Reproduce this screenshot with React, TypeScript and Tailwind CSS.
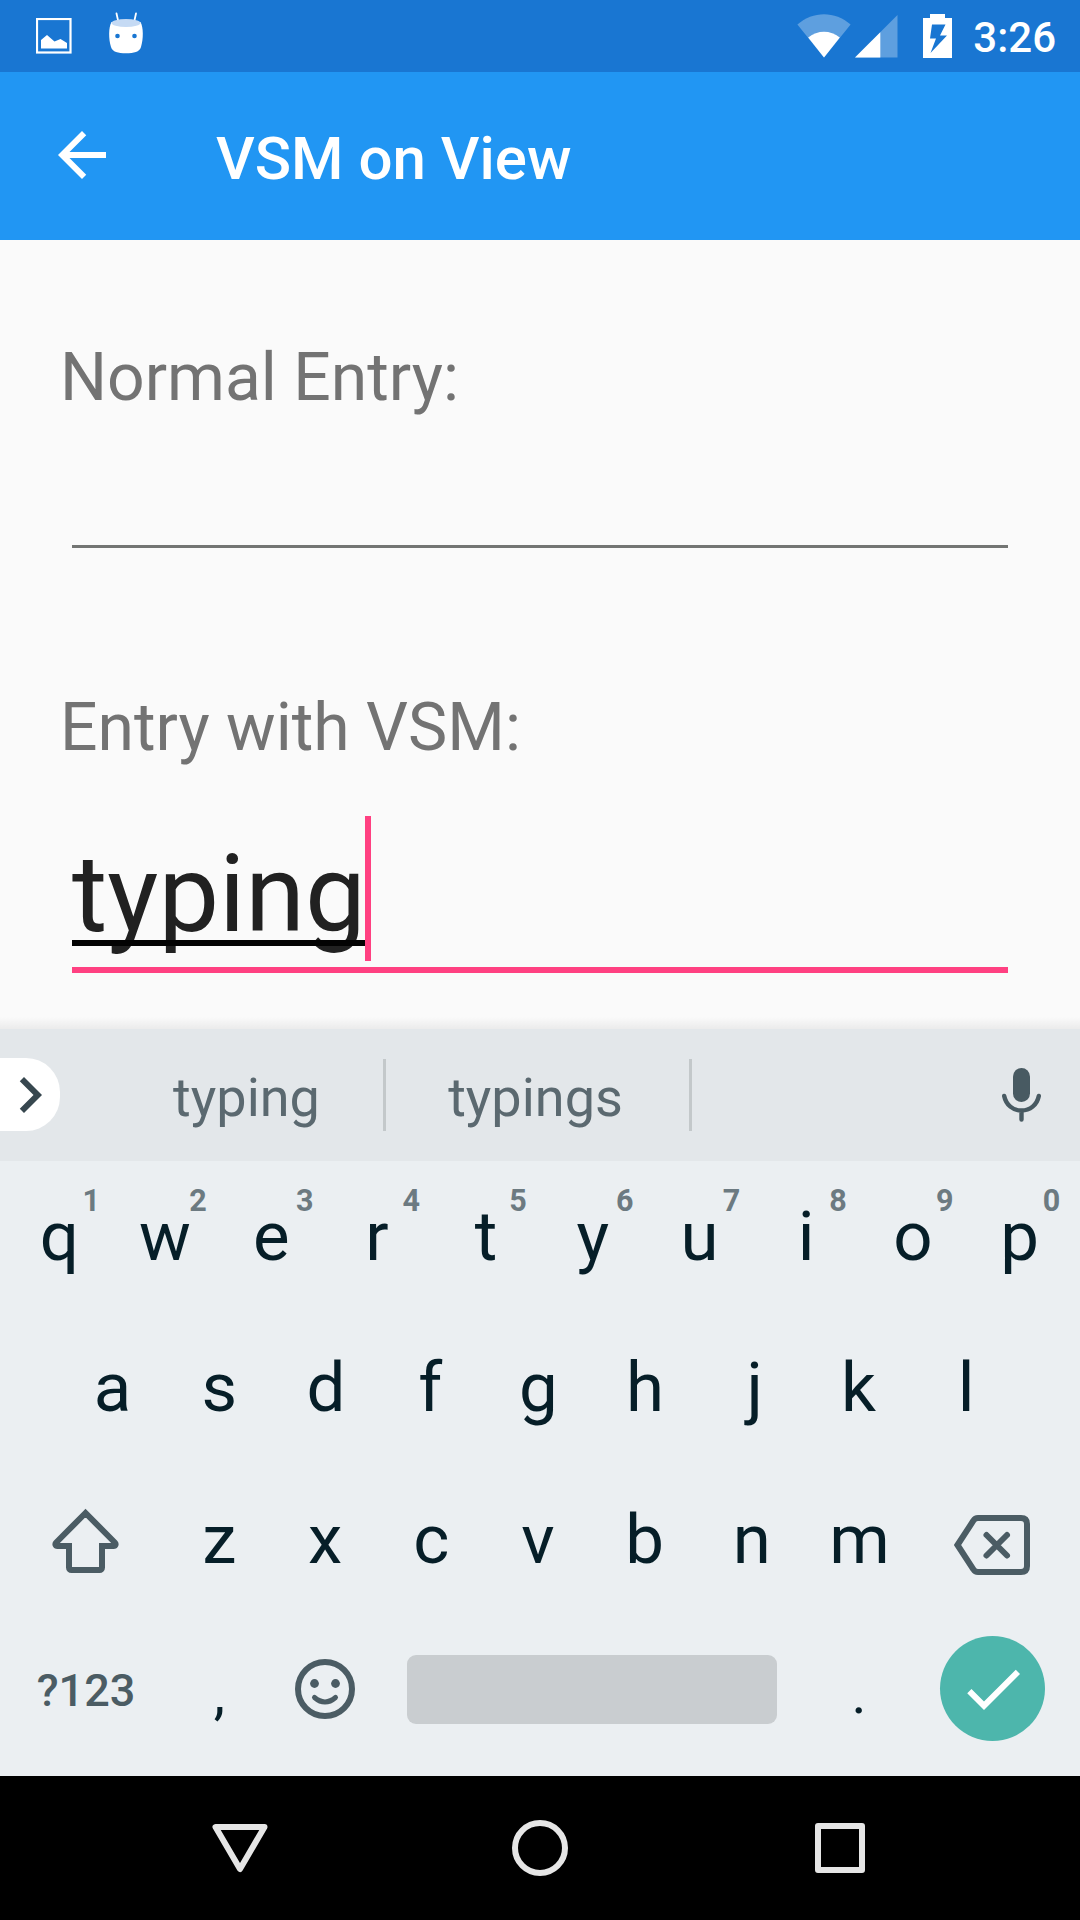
import React from "react";

function StatusBar() {
  return (
    <header className="flex h-[72px] shrink-0 items-center bg-[#1976d2] pl-[36px] text-white">
      <svg className="-mt-px h-[36px] w-[36px]" viewBox="0 0 36 36" fill="none">
        <rect x="1" y="1" width="33.500" height="33.500" stroke="currentColor" strokeWidth="2.200" />
        <path d="M5 30.500V22l6-5 7.500 6.500 6-2.500 6.500 4v5.500z" fill="currentColor" />
      </svg>
      <svg className="-mt-[6px] ml-[36px] h-[42px] w-[36px]" viewBox="0 0 36 42" fill="none">
        <path d="M8.500 1.500l2 9M28 1.500l-2 9" stroke="currentColor" strokeWidth="1.800" strokeLinecap="round" />
        <path d="M3.500 10C.5 15 .5 27 3 35c1.500 5 7 6.200 15 6.200S31.500 40 33 35C35.500 27 35.500 15 32.500 10z" fill="currentColor" />
        <ellipse cx="18" cy="11" rx="14.500" ry="4" fill="#c5daf4" />
        <circle cx="9.500" cy="24" r="2.300" fill="#1976d2" />
        <circle cx="26.500" cy="24" r="2.300" fill="#1976d2" />
      </svg>
      <svg className="ml-auto h-[44px] w-[54px]" viewBox="0 0 54 44">
        <path d="M27 43.500L.4 10.500C16-3.300 38-3.300 53.600 10.500z" fill="#fff" opacity=".3" />
        <path d="M27 43.500L11.200 23.500c9.500-7.800 22.100-7.800 31.600 0z" fill="#fff" />
      </svg>
      <svg className="ml-[4px] h-[44px] w-[43px]" viewBox="0 0 43 44">
        <path d="M0 43.500L42.500 1v42.500z" fill="#fff" opacity=".3" />
        <path d="M0 43.500L25.300 18.200v25.300z" fill="#fff" />
      </svg>
      <svg className="ml-[25px] h-[44px] w-[29px]" viewBox="0 0 29 44">
        <path fillRule="evenodd" d="M7 0h15v4h7v40H0V4h7zM9 10.500L7 24.500h6L7.500 39 24 21.500h-7l5.500-11z" fill="#fff" />
      </svg>
      <span className="ml-[21px] mr-[24px] pt-[3px] text-[42px] font-medium leading-[69px]">3:26</span>
    </header>
  );
}

function AppBar() {
  return (
    <div className="flex h-[168px] shrink-0 items-center bg-[#2196f3] pl-[46px] text-white">
      <svg className="-mt-[2px] h-[72px] w-[72px]" viewBox="0 0 24 24" fill="currentColor">
        <path d="M20 11H7.830l5.590-5.590L12 4l-8 8 8 8 1.410-1.410L7.830 13H20v-2z" />
      </svg>
      <h1 className="ml-[98px] pt-[5px] text-[60px] font-medium leading-[72px]">VSM on View</h1>
    </div>
  );
}

function Form() {
  return (
    <main className="relative flex h-[789px] shrink-0 flex-col bg-[#fafafa] px-[60px] pt-[99px]">
      <label className="text-[66px] leading-[78px] text-[#737373]">Normal Entry:</label>
      <div className="mx-[12px] h-[131px] border-b-[3px] border-[#737573]" />
      <label className="mt-[141px] text-[66px] leading-[78px] text-[#737373]">Entry with VSM:</label>
      <div className="mx-[12px] mt-[49px] flex h-[157px] items-start border-b-[6px] border-[#ff4081]">
        <span className="relative h-[145px] w-[293px] whitespace-nowrap text-[108px] leading-[157px] text-[#212121]">
          typing
          <i className="absolute left-0 top-[124px] h-[6px] w-[294px] bg-[#030303]" />
        </span>
        <i className="relative h-[145px] w-[6px] bg-[#ff4081]" />
      </div>
      <div className="absolute inset-x-0 bottom-0 h-[12px] bg-linear-to-b from-transparent to-black/6" />
    </main>
  );
}

function Suggestions() {
  return (
    <div className="flex h-[132px] shrink-0 items-center bg-[#e3e7ea] text-[54px] text-[#5b6970]">
      <div className="-mt-px flex h-[73px] w-[60px] items-center rounded-r-[34px] bg-white">
        <svg className="-ml-[6px] h-[72px] w-[72px] shrink-0" viewBox="0 0 24 24" fill="#37474f">
          <path d="M10 6L8.590 7.410 13.170 12l-4.580 4.590L10 18l6-6z" />
        </svg>
      </div>
      <span className="ml-[50px] w-[273px] pt-[4px] text-center">typing</span>
      <i className="h-[72px] w-[3px] bg-[#c3c8ca]" />
      <span className="w-[303px] pt-[4px] pr-[4px] text-center">typings</span>
      <i className="h-[72px] w-[3px] bg-[#c3c8ca]" />
      <svg className="-mt-px ml-auto mr-[39px] h-[54px] w-[39px]" viewBox="0 0 39 54" fill="none" stroke="#485a62">
        <rect x="11" y="0" width="17" height="34" rx="8.500" fill="#485a62" stroke="none" />
        <path d="M2.200 28C4 37 11 42.500 19.500 42.500S35 37 36.800 28M19.500 43v8.500" strokeWidth="4.400" strokeLinecap="round" />
      </svg>
    </div>
  );
}

// Optical centring of individual glyphs inside their keys.
const glyphInset: Record<string, string> = {
  w: "pr-[2px]",
  e: "pr-[3px]",
  r: "pr-[5px]",
  f: "pr-[5px]",
  g: "pr-[2px]",
  h: "pr-[2px]",
  j: "pl-[4px]",
  k: "pr-[2px]",
  x: "pr-[2px]",
  c: "pr-[3px]",
  v: "pr-[3px]",
  b: "pr-[3px]",
  n: "pr-[2px]",
};

function Key({ label, hint }: { label: string; hint?: string }) {
  return (
    <div className="relative w-[106.7px] shrink-0 text-center text-[69px] leading-[151px]">
      <div className={glyphInset[label] ?? ""}>{label}</div>
      {hint && (
        <sup className="absolute top-[20px] left-[76.5px] text-[30.5px] font-bold leading-[40px] text-[#6c7a81]">{hint}</sup>
      )}
    </div>
  );
}

function PunctuationKey({ label }: { label: string }) {
  return <div className="w-[106.7px] shrink-0 pt-[3px] text-center text-[57px] leading-[151px]">{label}</div>;
}

function Keyboard() {
  return (
    <section className="flex h-[615px] shrink-0 flex-col bg-[#ebeff2] pl-[6px] text-[#061e28]">
      <div className="flex h-[151px]">
        {"qwertyuiop".split("").map((k, i) => (
          <Key key={k} label={k} hint={String((i + 1) % 10)} />
        ))}
      </div>
      <div className="flex h-[152px] pl-[53.3px]">
        {"asdfghjkl".split("").map((k) => (
          <Key key={k} label={k} />
        ))}
      </div>
      <div className="flex h-[151px] items-start">
        <svg className="mt-[44px] ml-[45px] mr-[46px] h-[66px] w-[69px] shrink-0" viewBox="0 0 69 66" fill="none" stroke="#4b5c64" strokeWidth="6">
          <path d="M34.500 5L5.200 34.500c-1.500 1.600-.7 3.500 1.300 3.500H18v21.500c0 1.500 1 2.500 2.500 2.500h28c1.500 0 2.500-1 2.500-2.500V38h11.500c2 0 2.800-1.900 1.300-3.500z" />
        </svg>
        {"zxcvbnm".split("").map((k) => (
          <Key key={k} label={k} />
        ))}
        <svg className="mt-[51px] ml-[41px] h-[60px] w-[76px] shrink-0" viewBox="0 0 76 60" fill="none" stroke="#4b5c64" strokeWidth="6">
          <path d="M3.500 30L19.500 5.500Q21 3 24 3h43q6 0 6 6v42q0 6-6 6H24q-3 0-4.500-2.500z" />
          <path d="M32.500 20l20.500 20.500M53 20L32.500 40.500" strokeLinecap="round" />
        </svg>
      </div>
      <div className="flex h-[150px]">
        <div className="w-[160px] shrink-0 pt-[49px] text-center text-[45px] font-medium leading-[54px] text-[#4b5c64]">?123</div>
        <PunctuationKey label="," />
        <svg className="mt-[44px] ml-[22px] h-[60px] w-[60px] shrink-0" viewBox="0 0 60 60" fill="none" stroke="#4b5c64" strokeWidth="6">
          <circle cx="30" cy="30" r="27" />
          <circle cx="19.500" cy="24.500" r="4.400" fill="#4b5c64" stroke="none" />
          <circle cx="40.500" cy="24.500" r="4.400" fill="#4b5c64" stroke="none" />
          <path d="M19.500 38.500q10.500 9 21 0" strokeWidth="5" strokeLinecap="round" />
        </svg>
        <div className="mt-[40px] ml-[52px] mr-[29px] h-[69px] w-[370px] shrink-0 rounded-[9px] bg-[#c9cdd0]" />
        <PunctuationKey label="." />
        <div className="mt-[21px] ml-[28px] flex h-[105px] w-[105px] shrink-0 items-center justify-center rounded-full bg-[#4db6ac]">
          <svg className="h-[72px] w-[72px]" viewBox="0 0 24 24" fill="#fff">
            <path d="M9 16.170L4.830 12l-1.420 1.410L9 19 21 7l-1.410-1.410z" />
          </svg>
        </div>
      </div>
    </section>
  );
}

function NavBar() {
  return (
    <nav className="flex h-[144px] shrink-0 items-center justify-center gap-[240px] bg-black text-[#e6e6e6]">
      <svg className="h-[60px] w-[60px]" viewBox="0 0 60 60" fill="none" stroke="currentColor" strokeWidth="6" strokeLinejoin="round">
        <path d="M5.500 9h49L30 51z" />
      </svg>
      <svg className="h-[60px] w-[60px]" viewBox="0 0 60 60" fill="none" stroke="currentColor" strokeWidth="6">
        <circle cx="30" cy="30" r="25" />
      </svg>
      <svg className="h-[60px] w-[60px]" viewBox="0 0 60 60" fill="none" stroke="currentColor" strokeWidth="6" strokeLinejoin="round">
        <rect x="8" y="8" width="44" height="44" />
      </svg>
    </nav>
  );
}

export default function App() {
  return (
    <div className="flex h-[1920px] w-[1080px] flex-col overflow-hidden font-[Roboto,sans-serif]">
      <StatusBar />
      <AppBar />
      <Form />
      <Suggestions />
      <Keyboard />
      <NavBar />
    </div>
  );
}
